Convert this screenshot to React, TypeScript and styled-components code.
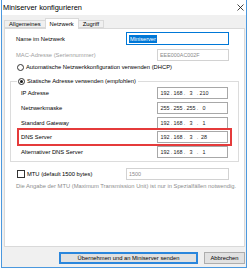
import React from "react";
import styled, { createGlobalStyle } from "styled-components";

const GlobalStyle = createGlobalStyle`
  html, body {
    margin: 0;
    padding: 0;
    background: #fdfdfd;
  }
  body {
    font-family: "Liberation Sans", Arial, sans-serif;
    color: #000;
  }
  * {
    box-sizing: border-box;
  }
`;

const Window = styled.div`
  width: 246px;
  height: 268px;
  margin-left: 1px;
  border: 1px solid #4b98de;
  border-top: none;
  background: #f0f0f0;
  display: flex;
  flex-direction: column;
`;

const TitleBar = styled.div`
  height: 15px;
  flex-shrink: 0;
  background: #fff;
  display: flex;
  align-items: center;
  justify-content: space-between;
  padding: 0 2px 0 1px;
  font-size: 7.4px;
`;

const Body = styled.div`
  flex: 1;
  display: flex;
  flex-direction: column;
  padding: 3px 1px 0 2px;
`;

const TabStrip = styled.div`
  height: 10px;
  display: flex;
  align-items: flex-end;
`;

const Tab = styled.div<{ $active?: boolean }>`
  position: relative;
  z-index: ${(p) => (p.$active ? 1 : 0)};
  height: ${(p) => (p.$active ? "11px" : "8px")};
  margin-bottom: ${(p) => (p.$active ? "-1px" : "0")};
  margin-left: -1px;
  padding: 0 4px;
  display: flex;
  align-items: center;
  font-size: 5.8px;
  background: ${(p) => (p.$active ? "#fff" : "#f0f0f0")};
  border: 1px solid #d9d9d9;
  border-bottom: ${(p) => (p.$active ? "none" : "1px solid #d9d9d9")};

  &:first-child {
    margin-left: 0;
  }
`;

const Panel = styled.div`
  flex: 1;
  background: #fff;
  border: 1px solid #d9d9d9;
  padding-top: 3px;
  display: flex;
  flex-direction: column;
  font-size: 5.8px;
`;

const FormRow = styled.div<{ $h?: number; $top?: number }>`
  height: ${(p) => p.$h ?? 12}px;
  margin-top: ${(p) => p.$top ?? 0}px;
  padding: 0 15px 0 11px;
  display: flex;
  align-items: center;
  justify-content: space-between;
`;

const Label = styled.span<{ $muted?: boolean }>`
  color: ${(p) => (p.$muted ? "#9d9d9d" : "#000")};
  white-space: nowrap;
`;

const Choice = styled.label`
  display: flex;
  align-items: center;
  gap: 2px;
  white-space: nowrap;
`;

const Radio = styled.span<{ $checked?: boolean }>`
  width: 7px;
  height: 7px;
  margin-left: 1px;
  border: 1px solid #333;
  border-radius: 50%;
  display: grid;
  place-items: center;

  &::after {
    content: "";
    width: 3px;
    height: 3px;
    border-radius: 50%;
    background: ${(p) => (p.$checked ? "#1a1a1a" : "transparent")};
  }
`;

const CheckBox = styled.span`
  width: 8px;
  height: 8px;
  margin-left: 1px;
  border: 1px solid #333;
  background: #fff;
`;

const TextBox = styled.div<{ $w: number; $focused?: boolean; $disabled?: boolean }>`
  width: ${(p) => p.$w}px;
  height: ${(p) => (p.$focused ? 13 : 12)}px;
  border: 1px solid
    ${(p) => (p.$focused ? "#0078d7" : p.$disabled ? "#d2d2d2" : "#a8a8a8")};
  background: #fff;
  color: ${(p) => (p.$disabled ? "#8a8a8a" : "#1a1a1a")};
  font-size: 5.4px;
  display: flex;
  align-items: center;
  padding-left: 2px;
  white-space: nowrap;
`;

const Selected = styled.span`
  background: #0078d7;
  color: #fff;
  padding: 1px 1px;
  font-size: 5.6px;
`;

const IpSegment = styled.span`
  width: 12px;
  text-align: center;
`;

const IpDot = styled.span`
  width: 1px;
  display: flex;
  justify-content: center;
`;

const Group = styled.fieldset`
  margin: 4px 5px 0 5px;
  padding: 0 0 2px 0;
  border: 1px solid #dcdcdc;
  min-width: 0;
`;

const Legend = styled.legend`
  height: 10px;
  margin-left: 6px;
  padding: 0 2px 0 0;
  display: flex;
  align-items: center;
`;

const GroupRows = styled.div`
  margin: 0 8px;
  display: flex;
  flex-direction: column;
  gap: 0.75px;
`;

const GroupRow = styled.div<{ $marked?: boolean }>`
  height: 14px;
  padding: 0 2px;
  display: flex;
  align-items: center;
  justify-content: space-between;
  outline: ${(p) => (p.$marked ? "2px solid #e53b3b" : "none")};
`;

const Hint = styled.div`
  margin-top: 2px;
  padding-left: 11px;
  line-height: 8px;
  color: #8d8d8d;
  white-space: nowrap;
`;

const Footer = styled.div`
  height: 20px;
  flex-shrink: 0;
  padding: 5px 0 3px;
  display: flex;
  justify-content: flex-end;
  gap: 6px;
`;

const Button = styled.button<{ $w: number; $primary?: boolean }>`
  width: ${(p) => p.$w}px;
  height: 12px;
  margin: 0;
  padding: 0;
  font-family: "Liberation Sans", Arial, sans-serif;
  font-size: 5.8px;
  color: #000;
  background: #e1e1e1;
  border: ${(p) => (p.$primary ? "2px solid #2a86dc" : "1px solid #adadad")};
`;

const CloseIcon = () => (
  <svg width="7" height="7" viewBox="0 0 7 7">
    <path d="M0.5 0.5 L6.5 6.5 M6.5 0.5 L0.5 6.5" stroke="#111" strokeWidth="0.8" />
  </svg>
);

const IpField = ({ parts }: { parts: string[] }) => (
  <TextBox $w={71} style={{ paddingLeft: 1 }}>
    {parts.map((p, i) => (
      <React.Fragment key={i}>
        {i > 0 && <IpDot>.</IpDot>}
        <IpSegment>{p}</IpSegment>
      </React.Fragment>
    ))}
  </TextBox>
);

const staticRows = [
  { label: "IP Adresse", ip: ["192", "168", "3", "210"] },
  { label: "Netzwerkmaske", ip: ["255", "255", "255", "0"] },
  { label: "Standard Gateway", ip: ["192", "168", "3", "1"] },
  { label: "DNS Server", ip: ["192", "168", "3", "28"], marked: true },
  { label: "Alternativer DNS Server", ip: ["192", "168", "3", "1"] },
];

export default function App() {
  return (
    <>
      <GlobalStyle />
      <Window>
        <TitleBar>
          <span>Miniserver konfigurieren</span>
          <CloseIcon />
        </TitleBar>
        <Body>
          <TabStrip>
            <Tab>Allgemeines</Tab>
            <Tab $active>Netzwerk</Tab>
            <Tab>Zugriff</Tab>
          </TabStrip>
          <Panel>
            <FormRow $h={13}>
              <Label>Name im Netzwerk</Label>
              <TextBox $w={103} $focused>
                <Selected>Miniserver</Selected>
              </TextBox>
            </FormRow>
            <FormRow $top={4}>
              <Label $muted>MAC-Adresse (Seriennummer)</Label>
              <TextBox $w={72} $disabled>
                EEE000AC002F
              </TextBox>
            </FormRow>
            <FormRow $h={10} $top={1}>
              <Choice>
                <Radio />
                Automatische Netzwerkkonfiguration verwenden (DHCP)
              </Choice>
            </FormRow>
            <Group>
              <Legend>
                <Choice>
                  <Radio $checked />
                  Statische Adresse verwenden (empfohlen)
                </Choice>
              </Legend>
              <GroupRows>
                {staticRows.map((r) => (
                  <GroupRow key={r.label} $marked={r.marked}>
                    <Label>{r.label}</Label>
                    <IpField parts={r.ip} />
                  </GroupRow>
                ))}
              </GroupRows>
            </Group>
            <FormRow $top={6}>
              <Choice>
                <CheckBox />
                MTU (default 1500 bytes)
              </Choice>
              <TextBox $w={103} $disabled>
                1500
              </TextBox>
            </FormRow>
            <Hint>
              Die Angabe der MTU (Maximum Transmission Unit) ist nur in Spezialfällen notwendig.
            </Hint>
          </Panel>
          <Footer>
            <Button $w={139} $primary>
              Übernehmen und an Miniserver senden
            </Button>
            <Button $w={41}>Abbrechen</Button>
          </Footer>
        </Body>
      </Window>
    </>
  );
}
